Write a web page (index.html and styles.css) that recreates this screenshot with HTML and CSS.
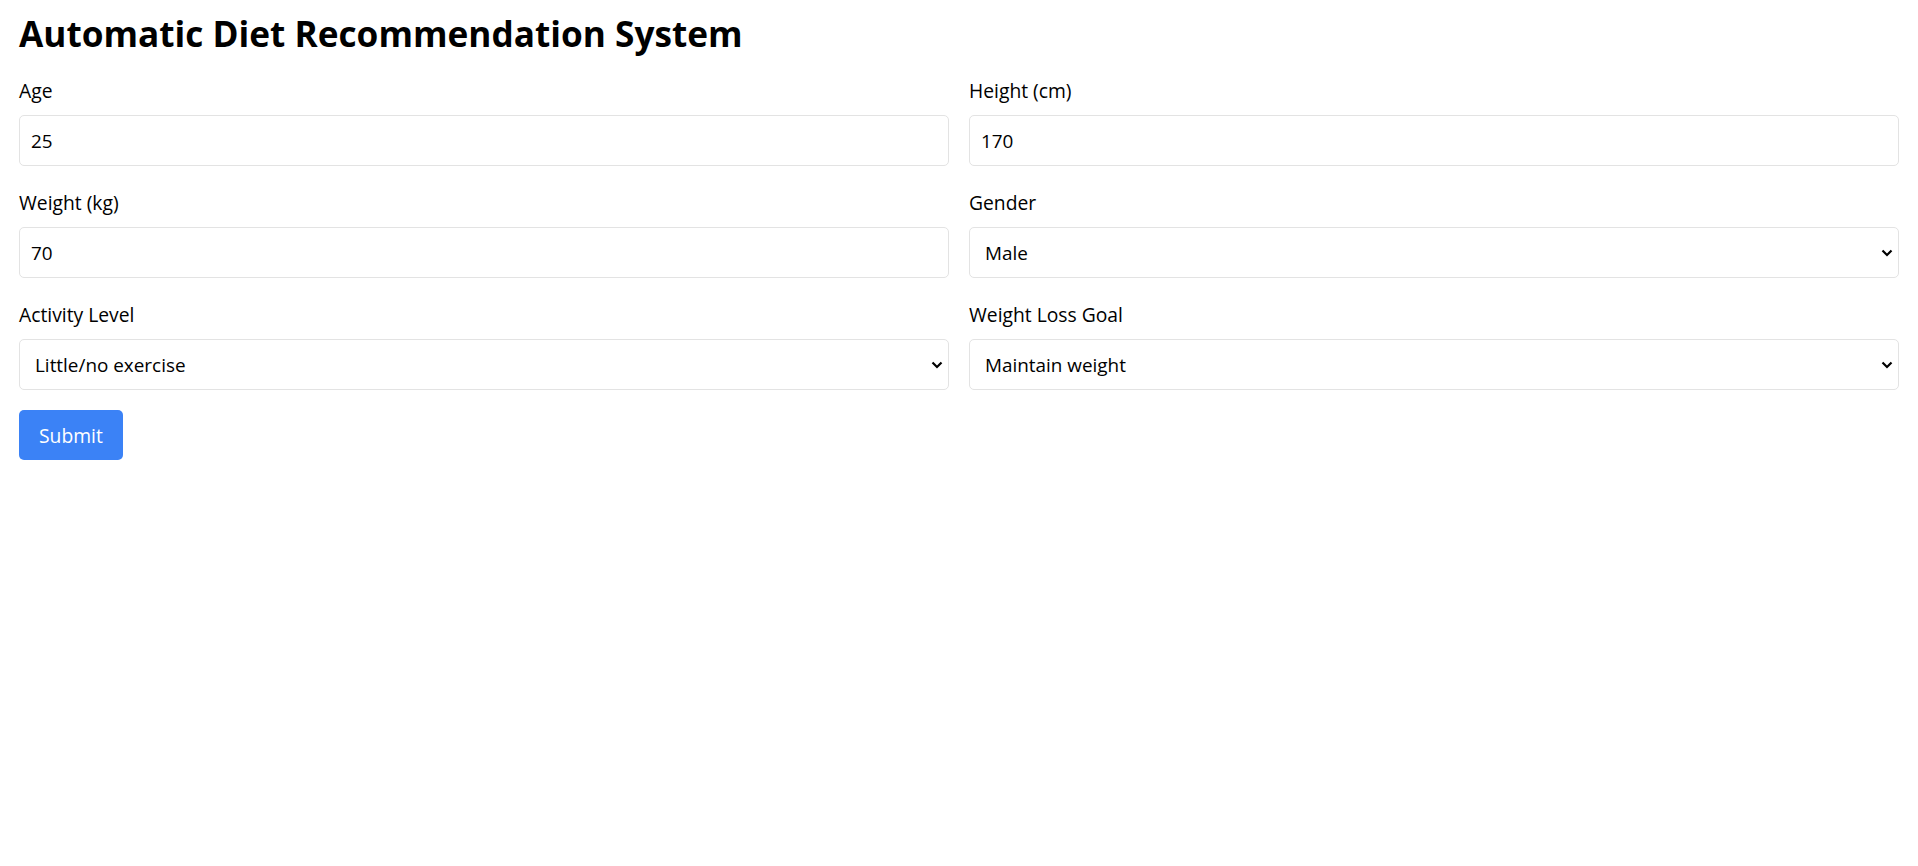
FILE: index.html
```html
<!DOCTYPE html>
<html lang="en">
<head>
<meta charset="utf-8">
<title>Automatic Diet Recommendation System</title>
<link rel="stylesheet" href="styles.css">
</head>
<body>
<div class="page">
  <h1 class="title">Automatic Diet Recommendation System</h1>
  <form class="form">
    <div class="grid">
      <div class="field">
        <label class="label" for="age">Age</label>
        <input class="control" id="age" type="number" value="25">
      </div>
      <div class="field">
        <label class="label" for="height">Height (cm)</label>
        <input class="control" id="height" type="number" value="170">
      </div>
      <div class="field">
        <label class="label" for="weight">Weight (kg)</label>
        <input class="control" id="weight" type="number" value="70">
      </div>
      <div class="field">
        <label class="label" for="gender">Gender</label>
        <div class="select-wrap">
          <select class="control select" id="gender">
            <option>Male</option>
            <option>Female</option>
          </select>
          <svg class="chevron" width="12" height="8" viewBox="0 0 12 8"><path d="M1.5 1.5 L6 6 L10.5 1.5" fill="none" stroke="#000" stroke-width="2.2"/></svg>
        </div>
      </div>
      <div class="field">
        <label class="label" for="activity">Activity Level</label>
        <div class="select-wrap">
          <select class="control select" id="activity">
            <option>Little/no exercise</option>
            <option>Light exercise</option>
            <option>Moderate exercise</option>
            <option>Very active</option>
          </select>
          <svg class="chevron" width="12" height="8" viewBox="0 0 12 8"><path d="M1.5 1.5 L6 6 L10.5 1.5" fill="none" stroke="#000" stroke-width="2.2"/></svg>
        </div>
      </div>
      <div class="field">
        <label class="label" for="goal">Weight Loss Goal</label>
        <div class="select-wrap">
          <select class="control select" id="goal">
            <option>Maintain weight</option>
            <option>Mild weight loss</option>
            <option>Weight loss</option>
            <option>Extreme weight loss</option>
          </select>
          <svg class="chevron" width="12" height="8" viewBox="0 0 12 8"><path d="M1.5 1.5 L6 6 L10.5 1.5" fill="none" stroke="#000" stroke-width="2.2"/></svg>
        </div>
      </div>
    </div>
    <button class="submit" type="button">Submit</button>
  </form>
</div>
</body>
</html>
```

FILE: styles.css
```css
* { box-sizing: border-box; }

html, body {
  margin: 0;
  background: #fff;
}

body {
  font-family: "Open Sans", "Noto Sans", sans-serif;
  color: #000;
}

.page {
  padding: 11px 19px;
}

.title {
  margin: 0 0 20px 0;
  font-size: 35.2px;
  line-height: 45px;
  font-weight: 700;
}

.form {
  display: flex;
  flex-direction: column;
  align-items: flex-start;
}

.grid {
  width: 100%;
  display: grid;
  grid-template-columns: 1fr 1fr;
  column-gap: 20px;
  row-gap: 22px;
}

.field {
  display: flex;
  flex-direction: column;
}

.label {
  display: block;
  font-size: 19.3px;
  line-height: 30px;
  margin-bottom: 9px;
}

.control {
  display: block;
  width: 100%;
  height: 51px;
  margin: 0;
  padding: 0 11px;
  border: 1px solid #e3e3e3;
  border-radius: 5px;
  background: #fff;
  font-family: inherit;
  font-size: 18.9px;
  color: #000;
  outline: none;
  -moz-appearance: textfield;
}

.control::-webkit-outer-spin-button,
.control::-webkit-inner-spin-button {
  -webkit-appearance: none;
  margin: 0;
}

.select-wrap {
  position: relative;
}

.select {
  -webkit-appearance: none;
  appearance: none;
  padding-left: 15px;
}

.chevron {
  position: absolute;
  right: 6px;
  top: 22px;
  pointer-events: none;
}

.submit {
  margin-top: 20px;
  height: 50px;
  padding: 0 20px;
  border: none;
  border-radius: 5px;
  background: #3b82f6;
  color: #fff;
  font-family: inherit;
  font-size: 19.3px;
  cursor: pointer;
}
```
